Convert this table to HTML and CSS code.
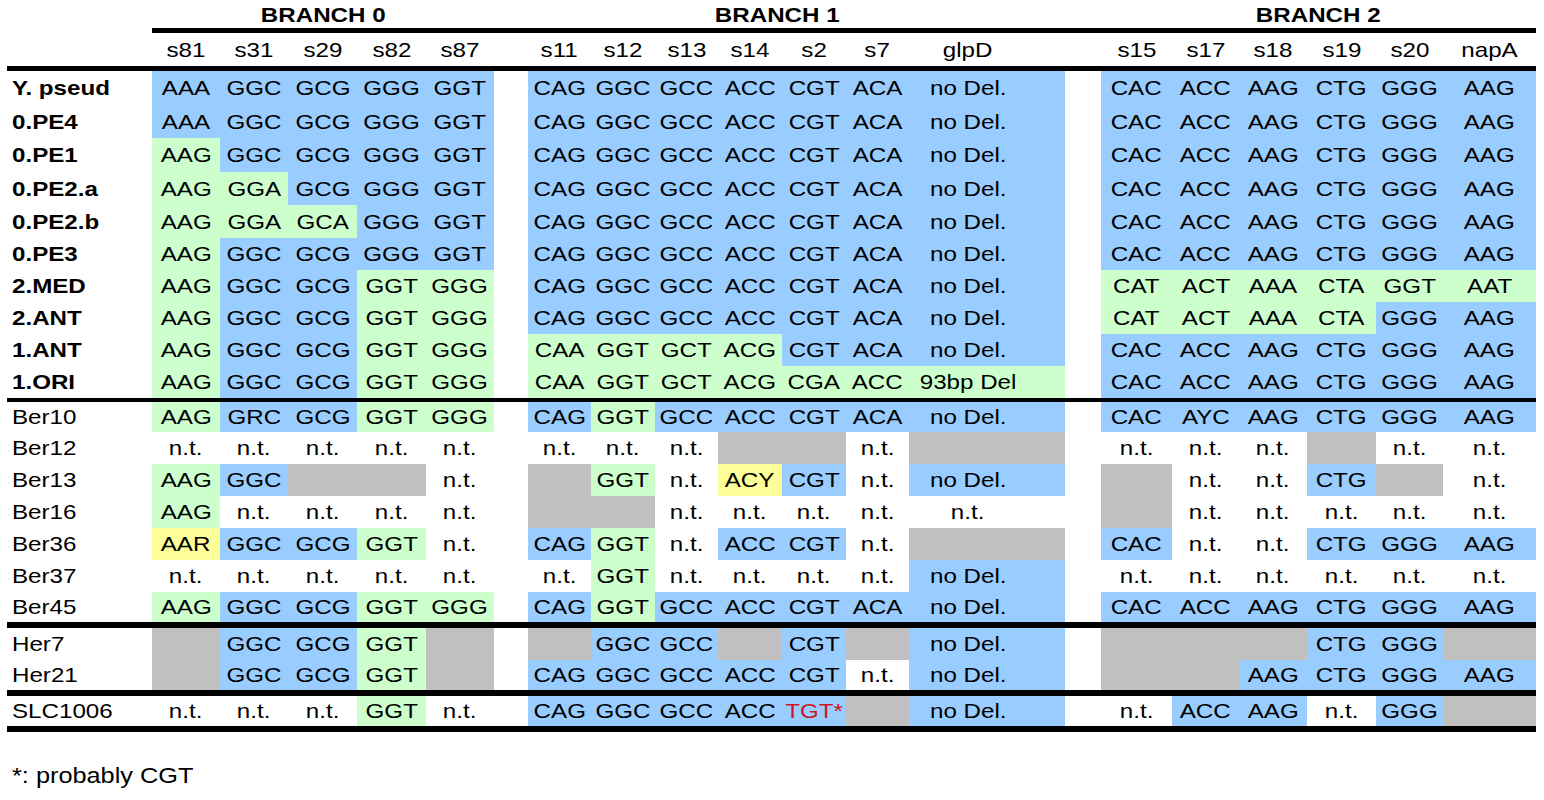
FILE: index.html
```html
<!DOCTYPE html>
<html lang="en">
<head>
<meta charset="utf-8">
<title>SNP table</title>
<link rel="stylesheet" href="styles.css">
</head>
<body>
<div class="sheet">
<table class="snp">
<colgroup>
<col class="w145">
<col class="w68"><col class="w68"><col class="w69"><col class="w69"><col class="w68">
<col class="w34">
<col class="w63"><col class="w64"><col class="w63"><col class="w64"><col class="w64"><col class="w63"><col class="w156">
<col class="w36">
<col class="w71"><col class="w67"><col class="w68"><col class="w69"><col class="w67"><col class="w93">
</colgroup>
<tbody>
<tr class="branch h28">
<td></td>
<td colspan="5"><span>BRANCH 0</span></td>
<td></td>
<td colspan="7" class="gl"><span>BRANCH 1</span></td>
<td></td>
<td colspan="6"><span>BRANCH 2</span></td>
</tr>
<tr class="rule h5"><td></td><td colspan="20" class="bar"></td></tr>
<tr class="head h33">
<td></td>
<td><span>s81</span></td><td><span>s31</span></td><td><span>s29</span></td><td><span>s82</span></td><td><span>s87</span></td>
<td></td>
<td><span>s11</span></td><td><span>s12</span></td><td><span>s13</span></td><td><span>s14</span></td><td><span>s2</span></td><td><span>s7</span></td><td class="gl"><span>glpD</span></td>
<td></td>
<td><span>s15</span></td><td><span>s17</span></td><td><span>s18</span></td><td><span>s19</span></td><td><span>s20</span></td><td><span>napA</span></td>
</tr>
<tr class="rule h5"><td colspan="21" class="bar"></td></tr>

<tr class="ref h34">
<td class="lab"><span>Y. pseud</span></td>
<td class="b"><span>AAA</span></td><td class="b"><span>GGC</span></td><td class="b"><span>GCG</span></td><td class="b"><span>GGG</span></td><td class="b"><span>GGT</span></td>
<td></td>
<td class="b"><span>CAG</span></td><td class="b"><span>GGC</span></td><td class="b"><span>GCC</span></td><td class="b"><span>ACC</span></td><td class="b"><span>CGT</span></td><td class="b"><span>ACA</span></td><td class="b gl"><span>no Del.</span></td>
<td></td>
<td class="b"><span>CAC</span></td><td class="b"><span>ACC</span></td><td class="b"><span>AAG</span></td><td class="b"><span>CTG</span></td><td class="b"><span>GGG</span></td><td class="b"><span>AAG</span></td>
</tr>
<tr class="ref h33">
<td class="lab"><span>0.PE4</span></td>
<td class="b"><span>AAA</span></td><td class="b"><span>GGC</span></td><td class="b"><span>GCG</span></td><td class="b"><span>GGG</span></td><td class="b"><span>GGT</span></td>
<td></td>
<td class="b"><span>CAG</span></td><td class="b"><span>GGC</span></td><td class="b"><span>GCC</span></td><td class="b"><span>ACC</span></td><td class="b"><span>CGT</span></td><td class="b"><span>ACA</span></td><td class="b gl"><span>no Del.</span></td>
<td></td>
<td class="b"><span>CAC</span></td><td class="b"><span>ACC</span></td><td class="b"><span>AAG</span></td><td class="b"><span>CTG</span></td><td class="b"><span>GGG</span></td><td class="b"><span>AAG</span></td>
</tr>
<tr class="ref h34">
<td class="lab"><span>0.PE1</span></td>
<td class="g"><span>AAG</span></td><td class="b"><span>GGC</span></td><td class="b"><span>GCG</span></td><td class="b"><span>GGG</span></td><td class="b"><span>GGT</span></td>
<td></td>
<td class="b"><span>CAG</span></td><td class="b"><span>GGC</span></td><td class="b"><span>GCC</span></td><td class="b"><span>ACC</span></td><td class="b"><span>CGT</span></td><td class="b"><span>ACA</span></td><td class="b gl"><span>no Del.</span></td>
<td></td>
<td class="b"><span>CAC</span></td><td class="b"><span>ACC</span></td><td class="b"><span>AAG</span></td><td class="b"><span>CTG</span></td><td class="b"><span>GGG</span></td><td class="b"><span>AAG</span></td>
</tr>
<tr class="ref h33">
<td class="lab"><span>0.PE2.a</span></td>
<td class="g"><span>AAG</span></td><td class="g"><span>GGA</span></td><td class="b"><span>GCG</span></td><td class="b"><span>GGG</span></td><td class="b"><span>GGT</span></td>
<td></td>
<td class="b"><span>CAG</span></td><td class="b"><span>GGC</span></td><td class="b"><span>GCC</span></td><td class="b"><span>ACC</span></td><td class="b"><span>CGT</span></td><td class="b"><span>ACA</span></td><td class="b gl"><span>no Del.</span></td>
<td></td>
<td class="b"><span>CAC</span></td><td class="b"><span>ACC</span></td><td class="b"><span>AAG</span></td><td class="b"><span>CTG</span></td><td class="b"><span>GGG</span></td><td class="b"><span>AAG</span></td>
</tr>
<tr class="ref h33">
<td class="lab"><span>0.PE2.b</span></td>
<td class="g"><span>AAG</span></td><td class="g"><span>GGA</span></td><td class="g"><span>GCA</span></td><td class="b"><span>GGG</span></td><td class="b"><span>GGT</span></td>
<td></td>
<td class="b"><span>CAG</span></td><td class="b"><span>GGC</span></td><td class="b"><span>GCC</span></td><td class="b"><span>ACC</span></td><td class="b"><span>CGT</span></td><td class="b"><span>ACA</span></td><td class="b gl"><span>no Del.</span></td>
<td></td>
<td class="b"><span>CAC</span></td><td class="b"><span>ACC</span></td><td class="b"><span>AAG</span></td><td class="b"><span>CTG</span></td><td class="b"><span>GGG</span></td><td class="b"><span>AAG</span></td>
</tr>
<tr class="ref h32">
<td class="lab"><span>0.PE3</span></td>
<td class="g"><span>AAG</span></td><td class="b"><span>GGC</span></td><td class="b"><span>GCG</span></td><td class="b"><span>GGG</span></td><td class="b"><span>GGT</span></td>
<td></td>
<td class="b"><span>CAG</span></td><td class="b"><span>GGC</span></td><td class="b"><span>GCC</span></td><td class="b"><span>ACC</span></td><td class="b"><span>CGT</span></td><td class="b"><span>ACA</span></td><td class="b gl"><span>no Del.</span></td>
<td></td>
<td class="b"><span>CAC</span></td><td class="b"><span>ACC</span></td><td class="b"><span>AAG</span></td><td class="b"><span>CTG</span></td><td class="b"><span>GGG</span></td><td class="b"><span>AAG</span></td>
</tr>
<tr class="ref h32">
<td class="lab"><span>2.MED</span></td>
<td class="g"><span>AAG</span></td><td class="b"><span>GGC</span></td><td class="b"><span>GCG</span></td><td class="g"><span>GGT</span></td><td class="g"><span>GGG</span></td>
<td></td>
<td class="b"><span>CAG</span></td><td class="b"><span>GGC</span></td><td class="b"><span>GCC</span></td><td class="b"><span>ACC</span></td><td class="b"><span>CGT</span></td><td class="b"><span>ACA</span></td><td class="b gl"><span>no Del.</span></td>
<td></td>
<td class="g"><span>CAT</span></td><td class="g"><span>ACT</span></td><td class="g"><span>AAA</span></td><td class="g"><span>CTA</span></td><td class="g"><span>GGT</span></td><td class="g"><span>AAT</span></td>
</tr>
<tr class="ref h32">
<td class="lab"><span>2.ANT</span></td>
<td class="g"><span>AAG</span></td><td class="b"><span>GGC</span></td><td class="b"><span>GCG</span></td><td class="g"><span>GGT</span></td><td class="g"><span>GGG</span></td>
<td></td>
<td class="b"><span>CAG</span></td><td class="b"><span>GGC</span></td><td class="b"><span>GCC</span></td><td class="b"><span>ACC</span></td><td class="b"><span>CGT</span></td><td class="b"><span>ACA</span></td><td class="b gl"><span>no Del.</span></td>
<td></td>
<td class="g"><span>CAT</span></td><td class="g"><span>ACT</span></td><td class="g"><span>AAA</span></td><td class="g"><span>CTA</span></td><td class="b"><span>GGG</span></td><td class="b"><span>AAG</span></td>
</tr>
<tr class="ref h32">
<td class="lab"><span>1.ANT</span></td>
<td class="g"><span>AAG</span></td><td class="b"><span>GGC</span></td><td class="b"><span>GCG</span></td><td class="g"><span>GGT</span></td><td class="g"><span>GGG</span></td>
<td></td>
<td class="g"><span>CAA</span></td><td class="g"><span>GGT</span></td><td class="g"><span>GCT</span></td><td class="g"><span>ACG</span></td><td class="b"><span>CGT</span></td><td class="b"><span>ACA</span></td><td class="b gl"><span>no Del.</span></td>
<td></td>
<td class="b"><span>CAC</span></td><td class="b"><span>ACC</span></td><td class="b"><span>AAG</span></td><td class="b"><span>CTG</span></td><td class="b"><span>GGG</span></td><td class="b"><span>AAG</span></td>
</tr>
<tr class="ref h32">
<td class="lab"><span>1.ORI</span></td>
<td class="g"><span>AAG</span></td><td class="b"><span>GGC</span></td><td class="b"><span>GCG</span></td><td class="g"><span>GGT</span></td><td class="g"><span>GGG</span></td>
<td></td>
<td class="g"><span>CAA</span></td><td class="g"><span>GGT</span></td><td class="g"><span>GCT</span></td><td class="g"><span>ACG</span></td><td class="g"><span>CGA</span></td><td class="g"><span>ACC</span></td><td class="g gl"><span>93bp Del</span></td>
<td></td>
<td class="b"><span>CAC</span></td><td class="b"><span>ACC</span></td><td class="b"><span>AAG</span></td><td class="b"><span>CTG</span></td><td class="b"><span>GGG</span></td><td class="b"><span>AAG</span></td>
</tr>
<tr class="rule h4"><td colspan="21" class="bar"></td></tr>

<tr class="iso h30">
<td class="lab"><span>Ber10</span></td>
<td class="g"><span>AAG</span></td><td class="b"><span>GRC</span></td><td class="b"><span>GCG</span></td><td class="g"><span>GGT</span></td><td class="g"><span>GGG</span></td>
<td></td>
<td class="b"><span>CAG</span></td><td class="g"><span>GGT</span></td><td class="b"><span>GCC</span></td><td class="b"><span>ACC</span></td><td class="b"><span>CGT</span></td><td class="b"><span>ACA</span></td><td class="b gl"><span>no Del.</span></td>
<td></td>
<td class="b"><span>CAC</span></td><td class="b"><span>AYC</span></td><td class="b"><span>AAG</span></td><td class="b"><span>CTG</span></td><td class="b"><span>GGG</span></td><td class="b"><span>AAG</span></td>
</tr>
<tr class="iso h32">
<td class="lab"><span>Ber12</span></td>
<td><span>n.t.</span></td><td><span>n.t.</span></td><td><span>n.t.</span></td><td><span>n.t.</span></td><td><span>n.t.</span></td>
<td></td>
<td><span>n.t.</span></td><td><span>n.t.</span></td><td><span>n.t.</span></td><td class="x"></td><td class="x"></td><td><span>n.t.</span></td><td class="x gl"></td>
<td></td>
<td><span>n.t.</span></td><td><span>n.t.</span></td><td><span>n.t.</span></td><td class="x"></td><td><span>n.t.</span></td><td><span>n.t.</span></td>
</tr>
<tr class="iso h32">
<td class="lab"><span>Ber13</span></td>
<td class="g"><span>AAG</span></td><td class="b"><span>GGC</span></td><td class="x"></td><td class="x"></td><td><span>n.t.</span></td>
<td></td>
<td class="x"></td><td class="g"><span>GGT</span></td><td><span>n.t.</span></td><td class="y"><span>ACY</span></td><td class="b"><span>CGT</span></td><td><span>n.t.</span></td><td class="b gl"><span>no Del.</span></td>
<td></td>
<td class="x"></td><td><span>n.t.</span></td><td><span>n.t.</span></td><td class="b"><span>CTG</span></td><td class="x"></td><td><span>n.t.</span></td>
</tr>
<tr class="iso h32">
<td class="lab"><span>Ber16</span></td>
<td class="g"><span>AAG</span></td><td><span>n.t.</span></td><td><span>n.t.</span></td><td><span>n.t.</span></td><td><span>n.t.</span></td>
<td></td>
<td class="x"></td><td class="x"></td><td><span>n.t.</span></td><td><span>n.t.</span></td><td><span>n.t.</span></td><td><span>n.t.</span></td><td class="gl"><span>n.t.</span></td>
<td></td>
<td class="x"></td><td><span>n.t.</span></td><td><span>n.t.</span></td><td><span>n.t.</span></td><td><span>n.t.</span></td><td><span>n.t.</span></td>
</tr>
<tr class="iso h32">
<td class="lab"><span>Ber36</span></td>
<td class="y"><span>AAR</span></td><td class="b"><span>GGC</span></td><td class="b"><span>GCG</span></td><td class="g"><span>GGT</span></td><td><span>n.t.</span></td>
<td></td>
<td class="b"><span>CAG</span></td><td class="g"><span>GGT</span></td><td><span>n.t.</span></td><td class="b"><span>ACC</span></td><td class="b"><span>CGT</span></td><td><span>n.t.</span></td><td class="x gl"></td>
<td></td>
<td class="b"><span>CAC</span></td><td><span>n.t.</span></td><td><span>n.t.</span></td><td class="b"><span>CTG</span></td><td class="b"><span>GGG</span></td><td class="b"><span>AAG</span></td>
</tr>
<tr class="iso h32">
<td class="lab"><span>Ber37</span></td>
<td><span>n.t.</span></td><td><span>n.t.</span></td><td><span>n.t.</span></td><td><span>n.t.</span></td><td><span>n.t.</span></td>
<td></td>
<td><span>n.t.</span></td><td class="g"><span>GGT</span></td><td><span>n.t.</span></td><td><span>n.t.</span></td><td><span>n.t.</span></td><td><span>n.t.</span></td><td class="b gl"><span>no Del.</span></td>
<td></td>
<td><span>n.t.</span></td><td><span>n.t.</span></td><td><span>n.t.</span></td><td><span>n.t.</span></td><td><span>n.t.</span></td><td><span>n.t.</span></td>
</tr>
<tr class="iso h30">
<td class="lab"><span>Ber45</span></td>
<td class="g"><span>AAG</span></td><td class="b"><span>GGC</span></td><td class="b"><span>GCG</span></td><td class="g"><span>GGT</span></td><td class="g"><span>GGG</span></td>
<td></td>
<td class="b"><span>CAG</span></td><td class="g"><span>GGT</span></td><td class="b"><span>GCC</span></td><td class="b"><span>ACC</span></td><td class="b"><span>CGT</span></td><td class="b"><span>ACA</span></td><td class="b gl"><span>no Del.</span></td>
<td></td>
<td class="b"><span>CAC</span></td><td class="b"><span>ACC</span></td><td class="b"><span>AAG</span></td><td class="b"><span>CTG</span></td><td class="b"><span>GGG</span></td><td class="b"><span>AAG</span></td>
</tr>
<tr class="rule h6"><td colspan="21" class="bar"></td></tr>

<tr class="iso h32">
<td class="lab"><span>Her7</span></td>
<td class="x"></td><td class="b"><span>GGC</span></td><td class="b"><span>GCG</span></td><td class="g"><span>GGT</span></td><td class="x"></td>
<td></td>
<td class="x"></td><td class="b"><span>GGC</span></td><td class="b"><span>GCC</span></td><td class="x"></td><td class="b"><span>CGT</span></td><td class="x"></td><td class="b gl"><span>no Del.</span></td>
<td></td>
<td class="x"></td><td class="x"></td><td class="x"></td><td class="b"><span>CTG</span></td><td class="b"><span>GGG</span></td><td class="x"></td>
</tr>
<tr class="iso h30">
<td class="lab"><span>Her21</span></td>
<td class="x"></td><td class="b"><span>GGC</span></td><td class="b"><span>GCG</span></td><td class="g"><span>GGT</span></td><td class="x"></td>
<td></td>
<td class="b"><span>CAG</span></td><td class="b"><span>GGC</span></td><td class="b"><span>GCC</span></td><td class="b"><span>ACC</span></td><td class="b"><span>CGT</span></td><td><span>n.t.</span></td><td class="b gl"><span>no Del.</span></td>
<td></td>
<td class="x"></td><td class="x"></td><td class="b"><span>AAG</span></td><td class="b"><span>CTG</span></td><td class="b"><span>GGG</span></td><td class="b"><span>AAG</span></td>
</tr>
<tr class="rule h6"><td colspan="21" class="bar"></td></tr>

<tr class="iso h30">
<td class="lab"><span>SLC1006</span></td>
<td><span>n.t.</span></td><td><span>n.t.</span></td><td><span>n.t.</span></td><td class="g"><span>GGT</span></td><td><span>n.t.</span></td>
<td></td>
<td class="b"><span>CAG</span></td><td class="b"><span>GGC</span></td><td class="b"><span>GCC</span></td><td class="b"><span>ACC</span></td><td class="b red"><span>TGT*</span></td><td class="x"></td><td class="b gl"><span>no Del.</span></td>
<td></td>
<td><span>n.t.</span></td><td class="b"><span>ACC</span></td><td class="b"><span>AAG</span></td><td><span>n.t.</span></td><td class="b"><span>GGG</span></td><td class="x"></td>
</tr>
<tr class="rule h6"><td colspan="21" class="bar"></td></tr>
</tbody>
</table>
<p class="note"><span>*: probably CGT</span></p>
</div>
</body>
</html>
```
FILE: styles.css
```css
html, body {
  margin: 0;
  background: #ffffff;
}

body {
  font-family: "Liberation Sans", Arial, Helvetica, sans-serif;
  color: #000000;
  font-size: 21px;
}

.sheet {
  padding-left: 7px;
}

.snp {
  border-collapse: separate;
  border-spacing: 0;
  table-layout: fixed;
  width: 1529px;
}

.snp td {
  padding: 0;
  text-align: center;
  vertical-align: middle;
  white-space: nowrap;
  overflow: visible;
}

.snp span {
  display: inline-block;
  transform: scaleX(1.15);
}

/* column widths */
.w145 { width: 145px; }
.w93 { width: 93px; }
.w71 { width: 71px; }
.w69 { width: 69px; }
.w68 { width: 68px; }
.w67 { width: 67px; }
.w64 { width: 64px; }
.w63 { width: 63px; }
.w36 { width: 36px; }
.w34 { width: 34px; }
.w156 { width: 156px; }

/* row heights */
.h4 { height: 4px; }
.h5 { height: 5px; }
.h6 { height: 6px; }
.h28 { height: 28px; }
.h30 { height: 30px; }
.h32 { height: 32px; }
.h33 { height: 33px; }
.h34 { height: 34px; }

.snp .branch td {
  font-weight: bold;
  padding-top: 2px;
}

.branch span {
  transform: scaleX(1.15);
}

.rule td {
  font-size: 0;
  line-height: 0;
}

.rule .bar {
  background: #000000;
}

.snp .gl {
  padding-right: 38px;
}

.lab {
  text-align: left !important;
  padding-left: 5px !important;
}

.lab span {
  transform-origin: 0 50%;
}

.ref .lab {
  font-weight: bold;
}

/* cell fills */
.b { background: #99ccff; }
.g { background: #ccffcc; }
.y { background: #ffff99; }
.x { background: #c0c0c0; }

.red {
  color: #d0141e;
}

.note {
  margin: 31px 0 0 5px;
  font-size: 22px;
}

.note span {
  display: inline-block;
  transform: scaleX(1.15);
  transform-origin: 0 50%;
}
```
